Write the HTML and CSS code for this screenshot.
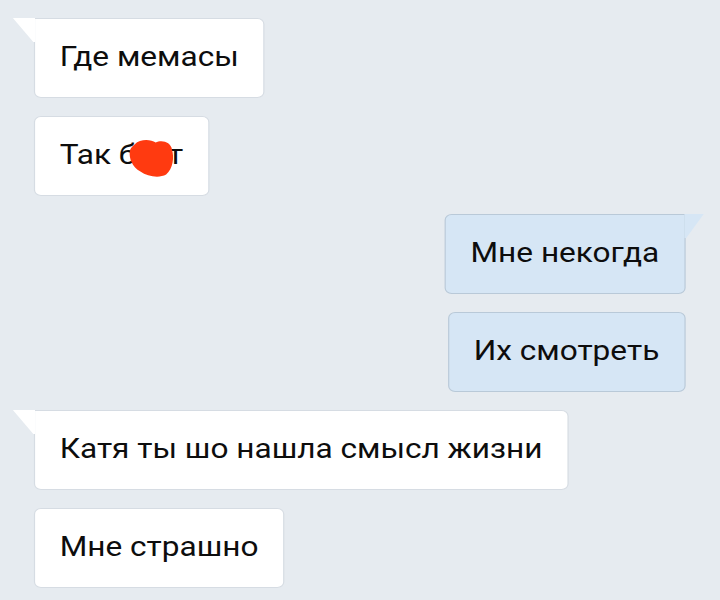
FILE: index.html
```html
<!DOCTYPE html>
<html lang="ru">
<head>
    <meta charset="UTF-8">
    <title>Диалог</title>
    <link rel="stylesheet" href="styles.css">
</head>
<body>
    <div class="chat">
        <div class="msg in tail">Где мемасы</div>
        <div class="msg in">Так б<span class="hidden"><svg class="blot" viewBox="0 0 40 40"><path d="M6 6 C11 0 20 1 24 4 C29 1 37 3 38 11 C40 19 39 30 33 36 C27 40 17 38 11 33 C4 29 1 19 2 13 C2 10 4 8 6 6 Z"/></svg></span>т</div>
        <div class="msg out tail">Мне некогда</div>
        <div class="msg out">Их смотреть</div>
        <div class="msg in tail">Катя ты шо нашла смысл жизни</div>
        <div class="msg in">Мне страшно</div>
    </div>
</body>
</html>
```

FILE: styles.css
```css
* {
    margin: 0;
    padding: 0;
    box-sizing: border-box;
}

body {
    background-color: #e6ebf0;
    font-family: Roboto, "Liberation Sans", sans-serif;
    color: #0d0d0d;
    overflow: hidden;
}

/* the screenshot is stretched sideways, so the whole chat is too */
.chat {
    width: 615.4px;
    transform: scaleX(1.17);
    transform-origin: 0 0;
    display: flex;
    flex-direction: column;
    gap: 18px;
    padding: 18px 29.9px 0 29px;
}

.msg {
    position: relative;
    height: 80px;
    display: flex;
    align-items: center;
    padding: 0 21px 2px 21px;
    font-size: 27px;
    border-radius: 6px;
    border: 1px solid #d6dce3;
}

.in {
    align-self: flex-start;
    background-color: #fff;
}

.out {
    align-self: flex-end;
    background-color: #d6e6f5;
    border-color: #b9c9d8;
}

/* bubble tails */
.in.tail {
    border-top-left-radius: 0;
}

.out.tail {
    border-top-right-radius: 0;
}

.tail::before {
    content: "";
    position: absolute;
    top: -1px;
    height: 24px;
}

.in.tail::before {
    left: -19px;
    width: 19px;
    background-color: #fff;
    clip-path: polygon(0 0, 100% 0, 100% 100%, 92% 100%);
}

.out.tail::before {
    right: -17px;
    width: 17px;
    background-color: #d6e6f5;
    clip-path: polygon(0 0, 100% 0, 12% 100%, 0 100%);
}

.hidden {
    display: inline-block;
    position: relative;
    width: 27px;
    height: 20px;
}

.blot {
    position: absolute;
    left: -8px;
    top: -7px;
    width: 40px;
    height: 41px;
    fill: #ff3a10;
}
```
